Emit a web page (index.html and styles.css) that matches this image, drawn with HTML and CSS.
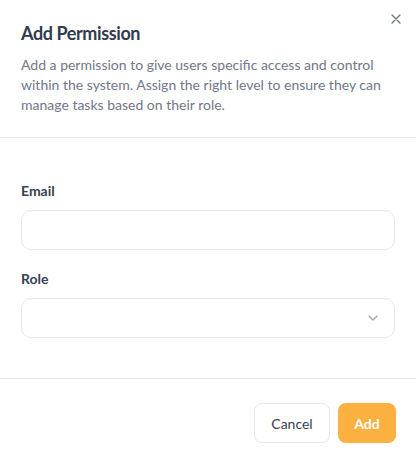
FILE: index.html
```html
<!DOCTYPE html>
<html lang="en">
<head>
<meta charset="utf-8">
<link rel="stylesheet" href="styles.css">
</head>
<body>
<div class="modal">
  <div class="header">
    <h2 class="title">Add Permission</h2>
    <p class="desc">Add a permission to give users specific access and control within the system. Assign the right level to ensure they can manage tasks based on their role.</p>
    <button class="close" aria-label="Close">
      <svg width="10" height="10" viewBox="0 0 10 10"><path d="M1 1L9 9M9 1L1 9" stroke="#6b7280" stroke-width="1.3" stroke-linecap="round"/></svg>
    </button>
  </div>
  <div class="body">
    <div class="field">
      <label class="label">Email</label>
      <div class="input"></div>
    </div>
    <div class="field">
      <label class="label">Role</label>
      <div class="input select">
        <svg width="10" height="6" viewBox="0 0 10 6"><path d="M1 1L5 5L9 1" fill="none" stroke="#9ca3af" stroke-width="1.2" stroke-linecap="round" stroke-linejoin="round"/></svg>
      </div>
    </div>
  </div>
  <div class="footer">
    <button class="btn cancel">Cancel</button>
    <button class="btn add">Add</button>
  </div>
</div>
</body>
</html>
```
FILE: styles.css
```css
* { box-sizing: border-box; }
html, body { margin: 0; padding: 0; background: #ffffff; }
body { font-family: Lato, "Noto Sans", sans-serif; color: #333b4f; }
.modal { width: 416px; }
.header {
  position: relative;
  padding: 21px 21px 22px 21px;
  border-bottom: 1px solid #e5e7eb;
}
.title {
  margin: 0;
  font-size: 18px;
  line-height: 24px;
  font-weight: 700;
  letter-spacing: -0.4px;
  color: #323a4e;
}
.desc {
  margin: 10px 0 0 0;
  font-size: 14px;
  line-height: 20px;
  color: #71778a;
}
.close {
  position: absolute;
  top: 14px;
  right: 15px;
  width: 10px;
  height: 10px;
  padding: 0;
  border: 0;
  background: none;
  display: flex;
}
.body {
  padding: 43px 21px 40px 21px;
  border-bottom: 1px solid #e5e7eb;
  display: flex;
  flex-direction: column;
  gap: 19px;
}
.field { display: flex; flex-direction: column; gap: 9px; }
.label {
  font-size: 14px;
  line-height: 20px;
  font-weight: 700;
  color: #374151;
}
.input {
  height: 40px;
  border: 1px solid #e5e7eb;
  border-radius: 10px;
  background: #fff;
}
.select {
  display: flex;
  align-items: center;
  justify-content: flex-end;
  padding-right: 16px;
}
.footer {
  display: flex;
  justify-content: flex-end;
  gap: 8px;
  padding: 24px 20px 0 0;
}
.btn {
  height: 40px;
  border-radius: 8px;
  font-family: Lato, "Noto Sans", sans-serif;
  font-size: 14px;
  padding: 0;
}
.cancel {
  width: 76px;
  background: #fff;
  border: 1px solid #e5e7eb;
  color: #374151;
}
.add {
  width: 58px;
  background: #fbb040;
  border: 0;
  color: #ffffff;
  font-weight: 700;
}
```
